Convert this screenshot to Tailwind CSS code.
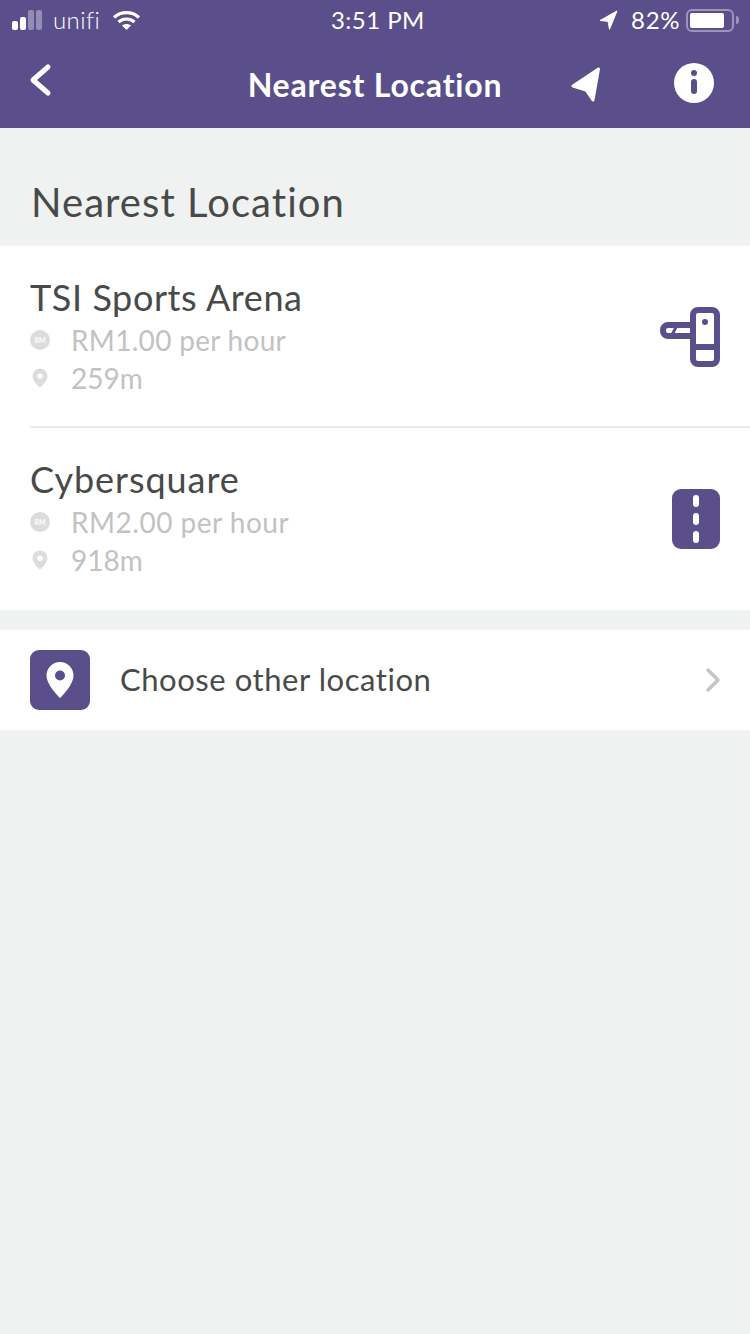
<!DOCTYPE html>
<html lang="en">
<head>
    <meta charset="UTF-8">
    <meta name="viewport" content="width=device-width, initial-scale=1.0">
    <title>Nearest Location</title>
    <script src="https://cdn.jsdelivr.net/npm/@tailwindcss/browser@4"></script>
</head>
<body class="bg-[#f0f2f1] font-['Lato',sans-serif] w-[750px] h-[1334px] overflow-hidden">

    <!-- header -->
    <div class="bg-[#5a4f8a] h-[128px] text-white">
        <div class="relative flex items-center h-[40px] pl-[12px] pr-[11px]">
            <div class="flex items-end gap-[2px] h-[20px]">
                <div class="w-[6px] h-[9px] rounded-[2px] bg-white"></div>
                <div class="w-[6px] h-[13px] rounded-[2px] bg-white"></div>
                <div class="w-[6px] h-[20px] rounded-[2px] bg-white/35"></div>
                <div class="w-[6px] h-[20px] rounded-[2px] bg-white/35"></div>
            </div>
            <span class="ml-[11px] text-[24px] leading-none font-light tracking-[0.4px]">unifi</span>
            <svg class="ml-[12px]" width="29" height="21" viewBox="0 0 29 21" fill="none" stroke="white" stroke-width="3.2">
                <path d="M2 7.500c7-6.400 18-6.400 25 0"/>
                <path d="M6.500 12c4.500-4 11.500-4 16 0"/>
                <path d="M14.500 20l-4.500-4.500c2.500-2 6.500-2 9 0z" fill="white" stroke="none"/>
            </svg>
            <span class="absolute left-[331px] text-[24px] leading-none font-normal tracking-[0.45px]">3:51 PM</span>
            <div class="ml-auto flex items-center">
                <svg width="19" height="20" viewBox="0 0 19 20"><path d="M18 1L1 10.500l8 .8 1.500 8z" fill="white" stroke="white" stroke-width="1" stroke-linejoin="round"/></svg>
                <span class="ml-[13px] text-[24px] leading-none font-normal tracking-[0.6px]">82%</span>
                <div class="ml-[6px] w-[48px] h-[23px] rounded-[6px] border-2 border-white/40 p-[2px]">
                    <div class="w-[34px] h-full rounded-[2px] bg-white"></div>
                </div>
                <div class="ml-[2px] w-[3px] h-[8px] rounded-r-full bg-white/40"></div>
            </div>
        </div>
        <div class="relative flex items-center justify-center h-[88px]">
            <svg class="absolute left-[28px] top-[23px]" width="24" height="34" viewBox="0 0 24 34" fill="none" stroke="white" stroke-width="5" stroke-linecap="round" stroke-linejoin="round">
                <path d="M20 4L5 17l15 13"/>
            </svg>
            <span class="text-[32px] leading-none font-bold tracking-[0.8px] mt-[2px]">Nearest Location</span>
            <svg class="absolute left-[570px] top-[26px]" width="32" height="36" viewBox="0 0 32 36">
                <path d="M28.500 3L3 20l13 4 7 10z" fill="white" stroke="white" stroke-width="3" stroke-linejoin="round"/>
            </svg>
            <div class="absolute left-[674px] top-[23px] w-[40px] h-[40px] rounded-full bg-white flex flex-col items-center pt-[7px]">
                <div class="w-[6px] h-[6px] rounded-full bg-[#5a4f8a]"></div>
                <div class="w-[6px] h-[15px] mt-[3px] rounded-[3px] bg-[#5a4f8a]"></div>
            </div>
        </div>
    </div>

    <!-- section title -->
    <h1 class="h-[118px] pl-[31px] pt-[51px] text-[40px] leading-[46px] font-normal tracking-[1.05px] text-[#484a49]">Nearest Location</h1>

    <!-- list -->
    <div class="bg-white">
        <div class="pl-[30px]">
            <div class="relative h-[182px] pt-[30px] border-b-2 border-[#ececec]">
                <div class="text-[36px] leading-[42px] tracking-[0.6px] text-[#484a49]">TSI Sports Arena</div>
                <div class="flex items-center mt-[3px] h-[38px]">
                    <div class="w-[20px] h-[20px] rounded-full bg-[#dcdcdc] flex items-center justify-center text-[7px] font-bold text-white">RM</div>
                    <span class="ml-[21px] text-[28px] tracking-[0.3px] text-[#c2c2c2]">RM1.00 per hour</span>
                </div>
                <div class="flex items-center h-[38px]">
                    <svg width="20" height="20" viewBox="0 0 20 20"><path fill-rule="evenodd" d="M10 0.500a7.500 7.500 0 0 0-7.500 7.500c0 4.500 5 9.500 7.500 11.500 2.500-2 7.500-7 7.500-11.500a7.500 7.500 0 0 0-7.500-7.500zm0 5a2.700 2.700 0 1 1 0 5.400 2.700 2.700 0 0 1 0-5.400z" fill="#dcdcdc"/></svg>
                    <span class="ml-[21px] text-[28px] text-[#c2c2c2]">259m</span>
                </div>
                <svg class="absolute left-[630px] top-[61px]" width="60" height="60" viewBox="0 0 60 60" fill="none" stroke="#5a4f8a" stroke-width="6">
                    <rect x="33" y="3" width="24" height="54" rx="5"/>
                    <path d="M33 40h24"/>
                    <path d="M33 18H8a5 5 0 0 0-5 5v1a5 5 0 0 0 5 5h25"/>
                    <circle cx="45" cy="15" r="3" fill="#5a4f8a" stroke="none"/>
                    <path d="M12 28l4-8" stroke-width="3"/>
                </svg>
            </div>
            <div class="relative h-[182px] pt-[30px]">
                <div class="text-[36px] leading-[42px] tracking-[0.95px] text-[#484a49]">Cybersquare</div>
                <div class="flex items-center mt-[3px] h-[38px]">
                    <div class="w-[20px] h-[20px] rounded-full bg-[#dcdcdc] flex items-center justify-center text-[7px] font-bold text-white">RM</div>
                    <span class="ml-[21px] text-[28px] tracking-[0.5px] text-[#c2c2c2]">RM2.00 per hour</span>
                </div>
                <div class="flex items-center h-[38px]">
                    <svg width="20" height="20" viewBox="0 0 20 20"><path fill-rule="evenodd" d="M10 0.500a7.500 7.500 0 0 0-7.500 7.500c0 4.500 5 9.500 7.500 11.500 2.500-2 7.500-7 7.500-11.500a7.500 7.500 0 0 0-7.500-7.500zm0 5a2.700 2.700 0 1 1 0 5.400 2.700 2.700 0 0 1 0-5.400z" fill="#dcdcdc"/></svg>
                    <span class="ml-[21px] text-[28px] text-[#c2c2c2]">918m</span>
                </div>
                <div class="absolute left-[642px] top-[61px] w-[48px] h-[60px] rounded-[9px] bg-[#5a4f8a] flex flex-col items-center justify-between py-[6px]">
                    <div class="w-[6px] h-[12px] rounded-[3px] bg-white"></div>
                    <div class="w-[6px] h-[12px] rounded-[3px] bg-white"></div>
                    <div class="w-[6px] h-[12px] rounded-[3px] bg-white"></div>
                </div>
            </div>
        </div>
    </div>

    <!-- other location -->
    <div class="mt-[20px] h-[100px] bg-white flex items-center pl-[30px] pr-[29px]">
        <div class="w-[60px] h-[60px] rounded-[9px] bg-[#5a4f8a] flex items-center justify-center">
            <svg width="30" height="38" viewBox="0 0 30 38"><path fill-rule="evenodd" d="M15 1A13.500 13.500 0 0 0 1.500 14.500C1.500 22.500 10 32 15 37c5-5 13.500-14.500 13.500-22.500A13.500 13.500 0 0 0 15 1zm0 8.500a5 5 0 1 1 0 10 5 5 0 0 1 0-10z" fill="white"/></svg>
        </div>
        <span class="ml-[30px] mt-[-2px] text-[31px] tracking-[0.55px] text-[#484a49]">Choose other location</span>
        <svg class="ml-auto" width="16" height="26" viewBox="0 0 16 26" fill="none" stroke="#c4c4c4" stroke-width="3.500" stroke-linecap="round" stroke-linejoin="round"><path d="M3 3l10 10L3 23"/></svg>
    </div>

</body>
</html>
